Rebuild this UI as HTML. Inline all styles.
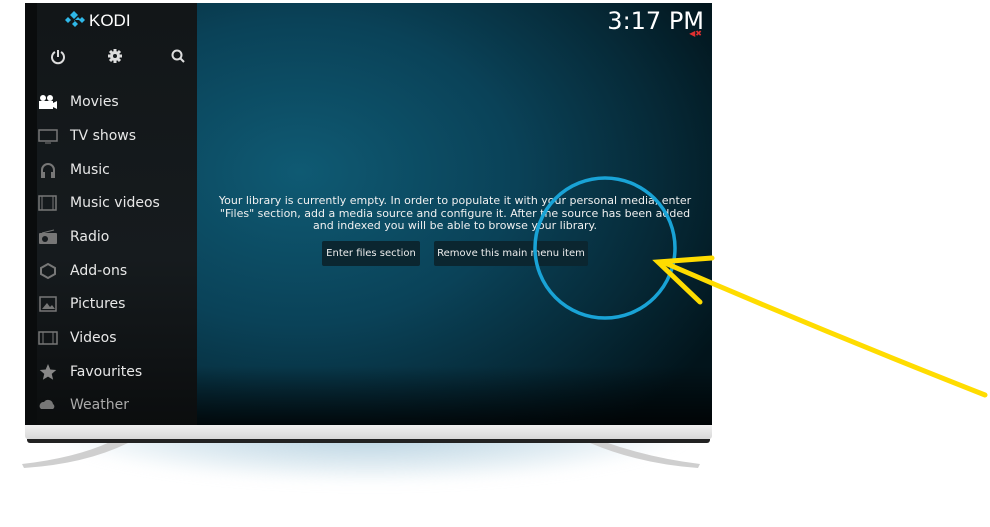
<!DOCTYPE html>
<html><head><meta charset="utf-8"><style>
*{margin:0;padding:0;box-sizing:border-box}
body{width:990px;height:527px;background:#fff;position:relative;overflow:hidden;font-family:"DejaVu Sans","Liberation Sans",sans-serif}
.glow{position:absolute;left:20px;top:400px;width:700px;height:110px;background:radial-gradient(ellipse 55% 60% at 50% 25%,rgba(160,195,215,.85),rgba(190,215,228,.5) 55%,rgba(255,255,255,0) 85%);filter:blur(6px)}
.screen{position:absolute;left:25px;top:3px;width:687px;height:423px;background:radial-gradient(ellipse 70% 80% at 40% 40%,#0f5a73 0%,#0a4258 45%,#062a38 75%,#02141b 100%);overflow:hidden}
.screen:after{content:"";position:absolute;left:172px;right:0;bottom:0;height:60px;background:linear-gradient(rgba(0,0,0,0),rgba(0,0,0,.8))}
.edge{position:absolute;left:0;top:0;width:12px;height:100%;background:#0a0c0d}
.side{position:absolute;left:12px;top:0;width:160px;height:100%;background:linear-gradient(#121618,#161b1e 60%,#0b0d0e)}
.logo{position:absolute;left:28px;top:8px;color:#fff;font-size:17px;font-family:"Liberation Sans",sans-serif}
.item{position:absolute;left:33px;color:#e8e8e8;font-size:14px}
.ic{position:absolute;left:14px;width:20px;height:16px}
.clock{position:absolute;right:8px;top:4px;color:#fff;font-size:24px;font-family:"DejaVu Sans",sans-serif}
.msg{position:absolute;width:500px;top:192px;text-align:center;color:#f0f0f0;font-size:11px;line-height:12.5px}
.btn{position:absolute;top:238px;height:25px;background:#0b2630;color:#eee;font-size:10px;line-height:25px;text-align:center;border-radius:2px}
.bezel{position:absolute;left:25px;top:425px;width:687px;height:14px;background:linear-gradient(#f0f0f0,#d8d8d8);border-radius:0 0 3px 3px}
.bline{position:absolute;left:27px;top:439px;width:683px;height:4px;background:#222;border-radius:0 0 3px 3px}
</style></head><body>
<div class="glow"></div>
<svg style="position:absolute;left:0;top:0" width="990" height="527">
<path d="M110 442 Q75 458 22 464 L24 468 Q85 464 128 443Z" fill="#cfcfcf"/>
<path d="M605 442 Q650 458 700 464 L698 468 Q640 464 590 443Z" fill="#cfcfcf"/>
</svg>
<div class="screen">
<div class="edge"></div>
<div class="side">
<div class="logo"><svg width="20" height="18" viewBox="0 0 20 18" style="vertical-align:-3px;margin-right:4px"><g fill="#2fb8e8"><path d="M9 0l4 4-4 4-4-4z"/><path d="M0 9l3-3 3 3-3 3z"/><path d="M9 10l4-4 3 3-7 0z"/><path d="M7 13l3-3 3 3-3 3z"/><path d="M14 9l3-3 3 3-3 3z"/></g></svg>KODI</div>
<svg style="position:absolute;left:12px;top:44px" width="140" height="20">
<g stroke="#ddd" stroke-width="2" fill="none"><path d="M6 5a6 6 0 1 0 6 0"/><path d="M9 3v7"/><circle cx="128" cy="8" r="4.5"/><path d="M131 11l4 4"/></g>
<g fill="#ddd"><circle cx="66" cy="9" r="5"/><g stroke="#ddd" stroke-width="3"><path d="M66 2v14M59 9h14M61 4l10 10M71 4l-10 10"/></g></g><circle cx="66" cy="9" r="2" fill="#161b1e"/>
</svg>
<div class="item" style="top:91px"><svg class="ic" style="left:-32px" viewBox="0 0 20 16"><circle cx="5" cy="4" r="3" fill="#fff"/><circle cx="12" cy="4" r="3" fill="#fff"/><rect x="1" y="7" width="14" height="8" fill="#fff"/><path d="M15 9l4-2v8l-4-2z" fill="#fff"/></svg>Movies</div>
<div class="item" style="top:125px"><svg class="ic" style="left:-32px" viewBox="0 0 20 16"><rect x="1" y="2" width="18" height="11" fill="none" stroke="#777" stroke-width="1.5"/><path d="M7 15h6" stroke="#777"/></svg>TV shows</div>
<div class="item" style="top:159px"><svg class="ic" style="left:-32px" viewBox="0 0 20 16"><path d="M4 12V8a6 6 0 0 1 12 0v4" fill="none" stroke="#777" stroke-width="2"/><rect x="3" y="10" width="4" height="6" fill="#777"/><rect x="13" y="10" width="4" height="6" fill="#777"/></svg>Music</div>
<div class="item" style="top:192px"><svg class="ic" style="left:-32px" viewBox="0 0 20 16"><rect x="1" y="1" width="17" height="14" fill="none" stroke="#777" stroke-width="1.5"/><path d="M4 1v14M15 1v14" stroke="#777"/></svg>Music videos</div>
<div class="item" style="top:226px"><svg class="ic" style="left:-32px" viewBox="0 0 20 16"><rect x="1" y="4" width="18" height="11" rx="1" fill="#777"/><circle cx="7" cy="10" r="3" fill="#161b1e"/><path d="M4 4l12-3" stroke="#777"/></svg>Radio</div>
<div class="item" style="top:260px"><svg class="ic" style="left:-32px" viewBox="0 0 20 16"><path d="M10 1l7 4v6l-7 4-7-4V5z" fill="none" stroke="#777" stroke-width="2"/></svg>Add-ons</div>
<div class="item" style="top:293px"><svg class="ic" style="left:-32px" viewBox="0 0 20 16"><rect x="2" y="1" width="16" height="14" fill="none" stroke="#777" stroke-width="1.5"/><path d="M4 13l5-6 3 4 2-2 3 4z" fill="#777"/></svg>Pictures</div>
<div class="item" style="top:327px"><svg class="ic" style="left:-32px" viewBox="0 0 20 16"><rect x="1" y="2" width="18" height="12" fill="none" stroke="#777" stroke-width="1.5"/><path d="M5 2v12M15 2v12" stroke="#777"/></svg>Videos</div>
<div class="item" style="top:361px"><svg class="ic" style="left:-32px" viewBox="0 0 20 18"><path d="M10 0l2.6 6.2 6.7.5-5.1 4.4 1.6 6.6L10 14.2 4.2 17.7l1.6-6.6L.7 6.7l6.7-.5z" fill="#888"/></svg>Favourites</div>
<div class="item" style="top:394px;color:#aaa"><svg class="ic" style="left:-32px" viewBox="0 0 20 16"><path d="M3 12a4 4 0 0 1 3-7 5 5 0 0 1 9 2 3 3 0 0 1 0 5z" fill="#777"/></svg>Weather</div>
</div>
<div class="clock">3:17 PM</div>
<div style="position:absolute;right:10px;top:26px;color:#e03030;font-size:8px">◀✖</div>
<div class="msg" style="left:180px">Your library is currently empty. In order to populate it with your personal media, enter<br>"Files" section, add a media source and configure it. After the source has been added<br>and indexed you will be able to browse your library.</div>
<div class="btn" style="left:297px;width:98px">Enter files section</div>
<div class="btn" style="left:409px;width:154px">Remove this main menu item</div>
</div>
<div class="bezel"></div>
<div class="bline"></div>
<svg style="position:absolute;left:0;top:0" width="990" height="527">
<circle cx="605" cy="248" r="70" fill="none" stroke="#19a3d6" stroke-width="3.5"/>
<g stroke="#ffdc00" stroke-width="5" stroke-linecap="round" fill="none">
<path d="M985 395 Q820 330 665 263"/>
<path d="M712 258 L658 262 L700 302"/>
</g>
</svg>
</body></html>
